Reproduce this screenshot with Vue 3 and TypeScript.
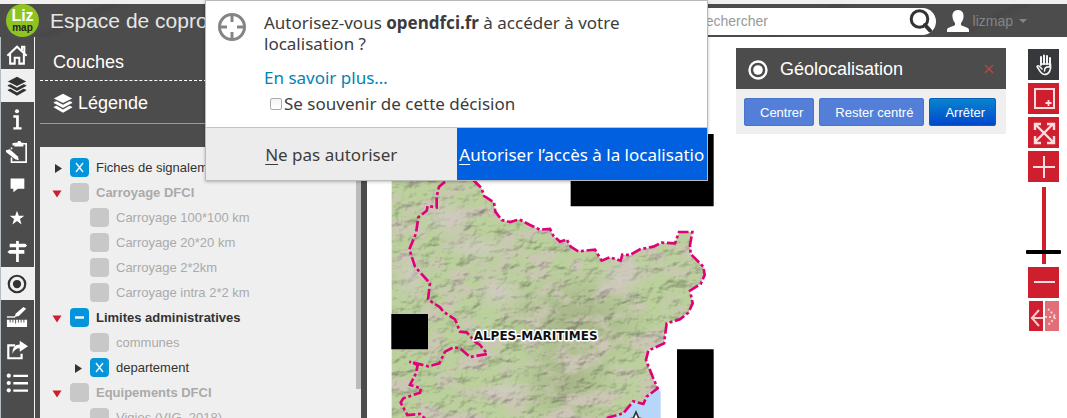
<script setup lang="ts">
import { ref } from 'vue'

interface Layer {
  id: string
  name: string
  level: number
  group?: boolean
  toggle?: 'open' | 'closed'
  mark?: 'cross' | 'minus'
}

const layers: Layer[] = [
  { id: 'fiches', name: 'Fiches de signalement', level: 0, toggle: 'closed', mark: 'cross' },
  { id: 'carroyage', name: 'Carroyage DFCI', level: 0, group: true, toggle: 'open' },
  { id: 'c100', name: 'Carroyage 100*100 km', level: 1 },
  { id: 'c20', name: 'Carroyage 20*20 km', level: 1 },
  { id: 'c2', name: 'Carroyage 2*2km', level: 1 },
  { id: 'intra', name: 'Carroyage intra 2*2 km', level: 1 },
  { id: 'limites', name: 'Limites administratives', level: 0, group: true, toggle: 'open', mark: 'minus' },
  { id: 'communes', name: 'communes', level: 1 },
  { id: 'departement', name: 'departement', level: 1, toggle: 'closed', mark: 'cross' },
  { id: 'equipements', name: 'Equipements DFCI', level: 0, group: true, toggle: 'open' },
  { id: 'vigies', name: 'Vigies (VIG, 2018)', level: 1 },
]

const tools = ['home', 'layers', 'info', 'edit', 'chat', 'star', 'sign', 'locate', 'measure', 'share', 'list']
const activeTools = ['layers', 'locate']
const zoom = ref(14)

const eastBorder =
  'M340 150L365 175L372 198L402 217L406 245L425 270L450 276L478 268L510 285L540 299L570 297L580 317L600 335L620 328L632 350L655 364L705 359L725 392L750 382L782 392L787 374L810 375L840 358L880 350L905 338L945 340L957 306L997 306L990 345L992 372L1030 410L1034 435L1022 462L990 482L998 520L985 548L960 568L920 580L912 640L865 662L858 690L878 740L893 775L860 800L850 822L820 814L790 850L740 864'
const westBorder =
  'M255 155L237 170L230 200L230 232L203 228L200 242L175 262L168 310L148 358L165 410L210 460L204 508L240 532L250 545L285 568L300 605L320 607L345 635L360 645L382 672L330 681L300 655L280 652L255 665L238 700L205 709L148 695L173 705L168 730L150 765L183 775L180 788L130 805L122 818L142 855L180 852L195 866'
const land = eastBorder + 'L740 870L94 870L94 150Z'
</script>

<template>
  <div class="page">
    <div class="strip"></div>
    <header class="topbar">
      <svg class="logo" viewBox="0 0 33 33" role="img" aria-label="Lizmap">
        <circle cx="16.5" cy="16.5" r="16.5" fill="#8fc31f" />
        <text x="16.5" y="17" text-anchor="middle" class="logo-top">Liz</text>
        <text x="16.5" y="27" text-anchor="middle" class="logo-bottom">map</text>
      </svg>
      <h1>Espace de coproduction</h1>
      <form class="search" @submit.prevent>
        <input type="text" placeholder="Rechercher" aria-label="Rechercher" />
        <button type="submit" aria-label="Lancer la recherche">
          <svg viewBox="0 0 26 26" fill="none" stroke="#333">
            <circle cx="10.500" cy="11" r="8.300" stroke-width="3" />
            <path d="M16 17L21 22.500" stroke-width="4" stroke-linecap="round" />
          </svg>
        </button>
      </form>
      <button class="user">
        <svg viewBox="0 0 22 22" fill="#fff">
          <path d="M11 0C7 0 5 3 5.500 7C5.800 10 7 12 8 13V15C5 17 0 17 0 20V22H22V20C22 17 17 17 14 15V13C15 12 16.200 10 16.500 7C17 3 15 0 11 0Z" />
        </svg>
        <span>lizmap</span>
        <i class="caret"></i>
      </button>
    </header>

    <main class="workspace">
      <nav class="menu" aria-label="Outils">
        <button v-for="tool in tools" :key="tool" :class="{ active: activeTools.includes(tool) }" :aria-label="tool">
          <svg viewBox="0 0 24 24" fill="currentColor" stroke="none">
            <g v-if="tool === 'home'" fill="none" stroke="currentColor" stroke-width="2.200">
              <path d="M1.500 14L12 4L22.500 14M17.500 8V4H20V11" />
              <path d="M4.500 12V22.500H9.500V16H14.500V22.500H19.500V12" />
            </g>
            <g v-else-if="tool === 'layers'">
              <path d="M12 2L22 7L12 12L2 7Z" />
              <path d="M2 11L5 10L12 14L19 10L22 11V12L12 17.500L2 12Z" />
              <path d="M2 16L5 15L12 19L19 15L22 16V17L12 22.500L2 17Z" />
            </g>
            <g v-else-if="tool === 'info'">
              <circle cx="12" cy="3.500" r="2.200" />
              <path d="M8 8H14V21H17V23.500H8V21H11V10.500H8Z" />
            </g>
            <g v-else-if="tool === 'edit'">
              <path d="M8 5V3H22V23H6V18M6 9V7" fill="none" stroke="currentColor" stroke-width="1.800" />
              <path d="M9 2H12L13.500 0H15.500L17 2H19V6H9Z" />
              <path d="M0 10L4 9L13 17L14 21L10 20L0 12Z" />
            </g>
            <path v-else-if="tool === 'chat'" d="M5 5H20V16H13L8 20V16H5Z" />
            <path v-else-if="tool === 'star'" d="M12 4L14 9.600H20L15.200 13.200L17 19L12 15.400L7 19L8.800 13.200L4 9.600H10Z" />
            <g v-else-if="tool === 'sign'">
              <path d="M11 1H14V24H11Z" />
              <path d="M4 4H21L23 6L21 8H4ZM20 11H4L1.500 13L4 15H20Z" />
            </g>
            <g v-else-if="tool === 'locate'">
              <circle cx="12" cy="12" r="9" fill="none" stroke="currentColor" stroke-width="2.400" />
              <circle cx="12" cy="12" r="4.500" />
            </g>
            <g v-else-if="tool === 'measure'">
              <path d="M1 15H23V23H1ZM4 15V18H5V15ZM7 15V18H8V15ZM10 15V19H11V15ZM13 15V18H14V15ZM16 15V18H17V15ZM19 15V18H20V15Z" fill-rule="evenodd" />
              <path d="M9 12L11 8L19 1L22 3L14 11Z" />
              <path d="M1 12H10" stroke="currentColor" stroke-width="1.500" />
            </g>
            <g v-else-if="tool === 'share'">
              <path d="M10 7H2.500V21H17V16" fill="none" stroke="currentColor" stroke-width="2.400" />
              <path d="M7 16C7 9 10 6 15 6V2L24 8L15 14V10C11 10 9 12 7 16Z" />
            </g>
            <g v-else>
              <circle cx="3" cy="4" r="2.300" /><circle cx="3" cy="12" r="2.300" /><circle cx="3" cy="20" r="2.300" />
              <path d="M8 3H24V5.500H8ZM8 11H24V13.500H8ZM8 19H24V21.500H8Z" />
            </g>
          </svg>
        </button>
      </nav>

      <section class="dock">
        <h2>Couches</h2>
        <h3>
          <svg viewBox="0 0 24 24" fill="currentColor">
            <path d="M12 2L22 7L12 12L2 7Z" />
            <path d="M2 11L5 10L12 14L19 10L22 11V12L12 17.500L2 12Z" />
            <path d="M2 16L5 15L12 19L19 15L22 16V17L12 22.500L2 17Z" />
          </svg>
          Légende
        </h3>
        <div class="tree">
          <ul>
            <li v-for="layer in layers" :key="layer.id" :class="{ child: layer.level === 1, group: layer.group, on: layer.mark }">
              <button v-if="layer.toggle" class="toggle" :class="layer.toggle" :aria-label="'Déplier ' + layer.name">
                <svg viewBox="0 0 10 10"><path :d="layer.toggle === 'open' ? 'M0.500 2.500H9.500L5 9.500Z' : 'M3 1V10L10 5.500Z'" /></svg>
              </button>
              <span v-else class="toggle"></span>
              <span class="box">
                <input :id="layer.id" type="checkbox" :checked="!!layer.mark" />
                <svg v-if="layer.mark" viewBox="0 0 19 19" fill="none" stroke="#e6f4fb">
                  <path v-if="layer.mark === 'cross'" d="M6 5L13 14M13 5L6 14" stroke-width="1.500" />
                  <path v-else d="M5 9.500H14" stroke-width="2.500" />
                </svg>
              </span>
              <label :for="layer.id">{{ layer.name }}</label>
            </li>
          </ul>
          <div class="scroll"></div>
        </div>
      </section>

      <section class="map">
        <svg class="canvas" viewBox="21 -279 1050 1143">
          <defs>
            <clipPath id="land"><path :d="land" /></clipPath>
            <filter id="relief" x="0" y="0" width="1" height="1" color-interpolation-filters="sRGB">
              <feTurbulence type="fractalNoise" baseFrequency="0.018 0.026" numOctaves="4" seed="8" result="height" />
              <feColorMatrix in="height" type="matrix" values="0 0 0 0 0  0 0 0 0 0  0 0 0 0 0  1 0 0 0 0" result="bump" />
              <feDiffuseLighting in="bump" surfaceScale="6" diffuseConstant="1.160" lighting-color="#fff" result="light">
                <feDistantLight azimuth="225" elevation="60" />
              </feDiffuseLighting>
              <feTurbulence type="fractalNoise" baseFrequency="0.012 0.018" numOctaves="4" seed="21" result="patch" />
              <feColorMatrix in="patch" type="matrix" values="0 0 0 0 0.800  0 0 0 0 0.780  0 0 0 0 0.710  0 4 0 0 -1.800" result="rock" />
              <feMerge result="ground"><feMergeNode in="SourceGraphic" /><feMergeNode in="rock" /></feMerge>
              <feBlend in="ground" in2="light" mode="multiply" />
            </filter>
            <radialGradient id="peaks"><stop offset="0" stop-color="#d8cbd0" /><stop offset="1" stop-color="#d8cbd0" stop-opacity="0" /></radialGradient>
            <radialGradient id="woods"><stop offset="0" stop-color="#a6b388" /><stop offset="1" stop-color="#a6b388" stop-opacity="0" /></radialGradient>
          </defs>
          <path d="M893 775L902 785V866H735L790 850L820 814L850 822L860 800Z" fill="#b7d7f8" />
          <g clip-path="url(#land)">
            <g filter="url(#relief)">
              <rect x="94" y="140" width="950" height="730" fill="#bbd09c" />
              <ellipse cx="650" cy="570" rx="240" ry="160" fill="url(#woods)" />
              <ellipse cx="620" cy="760" rx="160" ry="150" fill="url(#woods)" />
            </g>
            <g opacity="0.600">
              <ellipse cx="250" cy="260" rx="90" ry="70" fill="url(#peaks)" />
              <ellipse cx="360" cy="355" rx="120" ry="45" fill="url(#peaks)" />
              <ellipse cx="150" cy="440" rx="60" ry="90" fill="url(#peaks)" />
              <ellipse cx="420" cy="490" rx="90" ry="60" fill="url(#peaks)" />
              <ellipse cx="780" cy="440" rx="90" ry="80" fill="url(#peaks)" />
              <ellipse cx="440" cy="780" rx="110" ry="30" fill="url(#peaks)" />
            </g>
          </g>
          <g fill="none" stroke="#e2007a" stroke-width="8" stroke-dasharray="32 8 9 8">
            <path :d="eastBorder" /><path :d="westBorder" />
          </g>
          <path d="M632 12H1061V229H632ZM94 552H204V658H94ZM951 658H1061V870H951Z" />
          <path d="M828 846L836 864L852 868L840 880H816L804 868L820 864Z" fill="#fff" stroke="#333" stroke-width="5" />
          <text class="place" x="341" y="630">ALPES-MARITIMES</text>
        </svg>

        <section class="geoloc">
          <header>
            <svg viewBox="0 0 24 24" fill="#fff">
              <circle cx="12" cy="12" r="8.500" fill="none" stroke="#fff" stroke-width="2.400" />
              <circle cx="12" cy="12" r="4.800" />
            </svg>
            <h3>Géolocalisation</h3>
            <button aria-label="Fermer">
              <svg viewBox="0 0 10 10" fill="none" stroke="#b04848" stroke-width="1.500"><path d="M1 0L9 8M9 0L1 8" /></svg>
            </button>
          </header>
          <div class="actions">
            <button>Centrer</button>
            <button>Rester centré</button>
            <button class="stop">Arrêter</button>
          </div>
        </section>

        <div class="navbar">
          <button class="hand" aria-label="Déplacer">
            <svg viewBox="0 0 31 31" fill="none" stroke="#f4f4f4" stroke-linecap="round" stroke-linejoin="round">
              <path d="M13 16V8M16 15V6.500M19 15V7M22 17V9" stroke-width="2" />
              <path d="M22.500 15C23.500 21 21 25.500 16.500 25.500C12.500 25.500 11.500 21 9 17.500C10 15.500 12 17.500 14 20M13 15H21M21.500 18C18 17.500 16.500 19 16.500 22" stroke-width="1.600" />
            </svg>
          </button>
          <button aria-label="Zoom par rectangle">
            <svg viewBox="0 0 31 31" fill="none" stroke="#fbdde0" stroke-width="2">
              <path d="M7 6H26V25H7Z" /><path d="M20.500 17V23M17.500 20H23.500" stroke-width="1.800" />
            </svg>
          </button>
          <button aria-label="Étendue initiale">
            <svg viewBox="0 0 31 31" fill="none" stroke="#fbdde0" stroke-width="2.400">
              <path d="M7 7L25 25M25 7L7 25M7 13V7H13M19 7H26V13M26 19V26H19M13 26H7V19" />
            </svg>
          </button>
          <button aria-label="Zoom avant">
            <svg viewBox="0 0 31 31" stroke="#fbdde0" stroke-width="2"><path d="M5 16H27M16 5V27" /></svg>
          </button>
          <input v-model="zoom" type="range" min="0" max="100" aria-label="Niveau de zoom" />
          <button aria-label="Zoom arrière">
            <svg viewBox="0 0 31 31" stroke="#fbdde0" stroke-width="2"><path d="M6 15H27" /></svg>
          </button>
          <div class="history">
            <button aria-label="Vue précédente">
              <svg viewBox="0 0 14 30" fill="none" stroke="#f7ccd0" stroke-width="2"><path d="M10 9L3 17L10 25M2 17H14" /></svg>
            </button>
            <button aria-label="Vue suivante">
              <svg viewBox="0 0 14 30" fill="none" stroke="#f7ccd0" stroke-width="2" stroke-dasharray="2 2"><path d="M0 16H12M3 8L11 16L3 24" /></svg>
            </button>
          </div>
        </div>
      </section>
    </main>

    <div class="prompt" role="dialog" aria-label="Autorisation de localisation">
      <div class="prompt-body">
        <svg class="target" viewBox="0 0 30 30" fill="none" stroke="#858585">
          <circle cx="15" cy="15" r="12.500" stroke-width="3" />
          <path d="M15 3V10M15 20V27M3 15H10M20 15H27" stroke-width="3" />
        </svg>
        <div class="prompt-text">
          <p>Autorisez-vous <b>opendfci.fr</b> à accéder à votre<br />localisation ?</p>
          <a href="#">En savoir plus…</a>
          <label><input type="checkbox" />Se souvenir de cette décision</label>
        </div>
      </div>
      <div class="prompt-actions">
        <button><u>N</u>e pas autoriser</button>
        <button class="primary"><u>A</u>utoriser l’accès à la localisatio</button>
      </div>
    </div>
  </div>
</template>

<style>
body {
  margin: 0;
}
</style>

<style scoped>
* {
  box-sizing: border-box;
}
.page {
  position: relative;
  display: flex;
  flex-direction: column;
  height: 100vh;
  overflow: hidden;
  background: #fff;
  font-family: "Liberation Sans", Arial, sans-serif;
  font-size: 13px;
  color: #333;
}
.strip {
  flex: none;
  height: 4px;
  background: #f0efed;
}
h1, h2, h3, p, ul {
  margin: 0;
  padding: 0;
  font-weight: normal;
}
button {
  padding: 0;
  border: 0;
  background: none;
  font: inherit;
  color: inherit;
}
svg {
  display: block;
}
.topbar {
  display: flex;
  flex: none;
  align-items: center;
  height: 33px;
  padding: 0 40px 0 6px;
  background:
    repeating-linear-gradient(155deg, transparent 0 42px, #484848 46px 49px, transparent 54px 77px),
    #4c4c4c;
  color: #e6e6e6;
}
.logo {
  width: 33px;
  height: 33px;
  overflow: visible;
}
.logo-top {
  font: bold 16px "Liberation Sans", sans-serif;
  fill: #fff;
}
.logo-bottom {
  font: bold 10px "Liberation Sans", sans-serif;
  fill: #222;
}
h1 {
  flex: 1;
  margin-left: 11px;
  font-size: 21px;
}
.search {
  display: flex;
  align-items: center;
  width: 255px;
  height: 27px;
  margin-top: 1px;
  border-radius: 14px;
  background: #fff;
}
.search input {
  flex: 1;
  min-width: 0;
  padding: 0 0 0 15px;
  border: 0;
  background: none;
  font: 14px "Liberation Sans", Arial, sans-serif;
}
.search input::placeholder {
  color: #999;
}
.search button svg {
  width: 28px;
  height: 26px;
}
.user {
  display: flex;
  align-items: center;
  gap: 4px;
  margin-left: 11px;
  font-size: 14px;
  color: #858585;
}
.user svg {
  width: 22px;
  height: 22px;
}
.caret {
  margin-left: 2px;
  border: 4px solid transparent;
  border-top-color: #858585;
  border-bottom: 0;
}
.workspace {
  display: flex;
  flex: 1;
  min-height: 0;
}
.menu {
  flex: none;
  width: 35px;
  border-left: 1px solid #b5bcc2;
  border-right: 1px solid #f4f4f4;
  overflow: hidden;
  background: #4c4c4c;
  color: #fff;
}
.menu button {
  display: grid;
  place-items: center;
  width: 100%;
  height: 33px;
  padding-right: 1px;
}
.menu button:first-child {
  height: 32px;
  padding-top: 2px;
}
.menu button.active {
  background: #f0f0f0;
  color: #333;
}
.menu svg {
  width: 22px;
  height: 22px;
}
.dock {
  display: flex;
  flex: none;
  flex-direction: column;
  width: 332px;
  padding: 0 6px 0 5px;
  background: #4c4c4c;
  color: #fff;
}
h2 {
  padding-left: 13px;
  border-bottom: 1px dashed #fff;
  font-size: 18px;
  line-height: 51px;
  height: 44px;
}
.dock h3 {
  display: flex;
  align-items: center;
  gap: 4px;
  height: 43px;
  margin-bottom: 23px;
  padding: 2px 0 0 12px;
  border-bottom: 1px solid #999;
  font-size: 18px;
}
.dock h3 svg {
  width: 22px;
  height: 22px;
}
.tree {
  display: flex;
  flex: 1;
  min-height: 0;
  overflow: hidden;
  background: #efefef;
}
ul {
  flex: 1;
  padding: 8px 0 0 12px;
  list-style: none;
}
li {
  display: flex;
  align-items: center;
  height: 25px;
  color: #aaa;
}
li.child {
  padding-left: 20px;
}
li.group {
  font-weight: bold;
}
li.on {
  color: #333;
}
.toggle {
  width: 10px;
  height: 10px;
  margin-right: 8px;
  fill: #333;
}
.toggle.open {
  fill: #cf1f2e;
}
.box {
  display: grid;
  width: 19px;
  height: 19px;
  margin-right: 7px;
}
.box input,
.box svg {
  grid-area: 1 / 1;
  width: 19px;
  height: 19px;
  margin: 0;
  pointer-events: none;
}
.box input {
  appearance: none;
  border-radius: 4px;
  background: #c8c8c8;
  pointer-events: auto;
}
.box input:checked {
  background: #0594d9;
}
.box svg {
  z-index: 1;
}
.scroll {
  width: 5px;
  height: 242px;
  background: #bbb;
}
.map {
  position: relative;
  display: flex;
  flex: 1;
  justify-content: flex-end;
  align-items: flex-start;
  gap: 20px;
  min-width: 0;
  padding: 11px 6px 0 0;
}
.canvas {
  position: absolute;
  top: 0;
  left: 0;
  width: 350px;
  height: 381px;
}
.place {
  font: bold 36px "DejaVu Sans", sans-serif;
  fill: #111;
  stroke: #fff;
  stroke-width: 9px;
  stroke-linejoin: round;
  paint-order: stroke;
}
.geoloc {
  position: relative;
  width: 270px;
  background: #efefef;
}
.geoloc header {
  display: flex;
  align-items: center;
  height: 41px;
  padding: 2px 12px 0 10px;
  background: #4c4c4c;
  color: #fff;
}
.geoloc header > svg {
  width: 24px;
  height: 24px;
}
.geoloc h3 {
  flex: 1;
  margin-left: 10px;
  font-size: 18px;
}
.geoloc header button svg {
  width: 10px;
  height: 10px;
}
.actions {
  display: flex;
  gap: 5px;
  padding: 9px 8px 8px;
}
.actions button {
  height: 28px;
  padding: 0 11px 0 16px;
  border-radius: 3px;
  background: #547fd9;
  box-shadow: inset 0 0 0 1px #4a75cd;
  color: #fff;
  white-space: nowrap;
}
.actions .stop {
  background: linear-gradient(#0887cf, #0044cc);
  box-shadow: inset 0 0 0 1px #0860b8;
}
.navbar {
  position: relative;
  display: flex;
  flex-direction: column;
  align-items: center;
  gap: 3px;
  width: 35px;
  padding-top: 1px;
}
.navbar > button {
  width: 31px;
  height: 31px;
  background: #cf1f2e;
}
.navbar > .hand {
  background: #36383b;
}
.navbar input {
  appearance: none;
  writing-mode: vertical-lr;
  direction: rtl;
  width: 35px;
  height: 77px;
  margin: 2px 0 0;
  background: linear-gradient(#cf1f2e, #cf1f2e) center / 4px 100% no-repeat;
}
.navbar input::-webkit-slider-thumb {
  appearance: none;
  width: 35px;
  height: 4px;
  border-radius: 1px;
  background: #000;
}
.history {
  display: flex;
  gap: 2px;
}
.history button {
  width: 14px;
  height: 30px;
  background: #cf1f2e;
}
.history button + button {
  background: #e16f78;
}
.prompt {
  position: absolute;
  top: 0;
  left: 205px;
  width: 503px;
  border: 1px solid #bdb9b6;
  background: #fff;
  box-shadow: 0 1px 3px rgb(0 0 0 / 25%);
  font-family: "Noto Sans", "Open Sans", sans-serif;
  font-size: 17px;
  color: #3c3c3c;
}
.prompt-body {
  display: flex;
  gap: 17px;
  height: 126px;
  padding: 11px 11px 0;
}
.target {
  flex: none;
  width: 30px;
  height: 30px;
}
.prompt-text {
  line-height: 21px;
}
.prompt-text a {
  display: block;
  margin: 13px 0 5px;
  color: #0084b4;
  text-decoration: none;
}
.prompt-text label {
  display: flex;
  align-items: center;
  gap: 2px;
  padding-left: 6px;
}
.prompt-text input {
  appearance: none;
  width: 12px;
  height: 12px;
  margin: 0;
  border: 1px solid #aaa;
  border-radius: 2px;
  background: linear-gradient(#f4f4f4, #fff);
}
.prompt-actions {
  display: flex;
  height: 53px;
  border-top: 1px solid #c6c2bf;
  background: #ececec;
}
.prompt-actions button {
  flex: 1;
  min-width: 0;
  overflow: hidden;
  white-space: nowrap;
}
.prompt-actions .primary {
  background: #0060df;
  color: #fff;
}
u {
  text-underline-offset: 3px;
}
</style>
